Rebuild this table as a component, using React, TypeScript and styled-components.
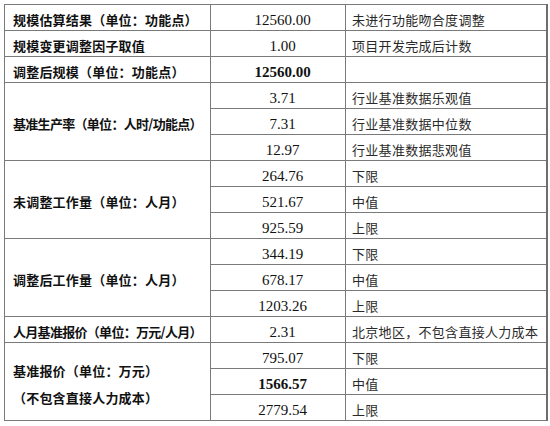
import React from "react";
import styled, { createGlobalStyle } from "styled-components";

const GlobalStyle = createGlobalStyle`
    body {
        margin: 0;
        background: #ffffff;
    }
    td {
        box-sizing: border-box;
    }
`;

const Page = styled.div`
    padding: 4px 0 0 4px;
`;

const Tabela = styled.table`
    border-collapse: collapse;
    table-layout: fixed;
    width: 542px;
    border: 1px solid #6e6e6e;
    border-right-width: 2px;
`;

const Linha = styled.tr`
    height: 26px;
`;

const Rotulo = styled.td<{ duplo?: boolean; apertado?: boolean }>`
    border: 1px solid #7a7a7a;
    padding: 5px 0 0 8px;
    font-family: "Noto Sans CJK SC", "Noto Sans", sans-serif;
    font-size: 13px;
    font-weight: bold;
    letter-spacing: ${props => (props.apertado ? "-0.7px" : "0.2px")};
    line-height: ${props => (props.duplo ? "27px" : "18px")};
    color: #111;
    white-space: nowrap;
    vertical-align: middle;
`;

const Valor = styled.td<{ forte?: boolean }>`
    height: 26px;
    border: 1px solid #7a7a7a;
    padding: 5px 0 0 9px;
    font-family: "Liberation Serif", "Times New Roman", serif;
    font-size: 15px;
    font-weight: ${props => (props.forte ? "bold" : "normal")};
    line-height: 18px;
    color: #111;
    text-align: center;
    vertical-align: middle;
`;

const Nota = styled.td`
    height: 26px;
    border: 1px solid #7a7a7a;
    padding: 5px 0 0 6px;
    font-family: "Noto Sans CJK SC", "Noto Sans", sans-serif;
    font-size: 13px;
    letter-spacing: 0.3px;
    line-height: 18px;
    color: #2a2a2a;
    white-space: nowrap;
    overflow: hidden;
    vertical-align: middle;
`;

type Faixa = { valor: string; nota: string; forte?: boolean };

const grupos: { rotulo: string[]; apertado?: boolean; faixas: Faixa[] }[] = [
    { rotulo: ["规模估算结果（单位：功能点）"], faixas: [{ valor: "12560.00", nota: "未进行功能吻合度调整" }] },
    { rotulo: ["规模变更调整因子取值"], faixas: [{ valor: "1.00", nota: "项目开发完成后计数" }] },
    { rotulo: ["调整后规模（单位：功能点）"], faixas: [{ valor: "12560.00", nota: "", forte: true }] },
    {
        rotulo: ["基准生产率（单位：人时/功能点）"],
        apertado: true,
        faixas: [
            { valor: "3.71", nota: "行业基准数据乐观值" },
            { valor: "7.31", nota: "行业基准数据中位数" },
            { valor: "12.97", nota: "行业基准数据悲观值" },
        ],
    },
    {
        rotulo: ["未调整工作量（单位：人月）"],
        faixas: [
            { valor: "264.76", nota: "下限" },
            { valor: "521.67", nota: "中值" },
            { valor: "925.59", nota: "上限" },
        ],
    },
    {
        rotulo: ["调整后工作量（单位：人月）"],
        faixas: [
            { valor: "344.19", nota: "下限" },
            { valor: "678.17", nota: "中值" },
            { valor: "1203.26", nota: "上限" },
        ],
    },
    {
        rotulo: ["人月基准报价（单位：万元/人月）"],
        apertado: true,
        faixas: [{ valor: "2.31", nota: "北京地区，不包含直接人力成本" }],
    },
    {
        rotulo: ["基准报价（单位：万元）", "（不包含直接人力成本）"],
        faixas: [
            { valor: "795.07", nota: "下限" },
            { valor: "1566.57", nota: "中值", forte: true },
            { valor: "2779.54", nota: "上限" },
        ],
    },
];

const App = () => {
    return (
        <Page>
            <GlobalStyle />
            <Tabela>
                <colgroup>
                    <col style={{ width: 206 }} />
                    <col style={{ width: 135 }} />
                    <col style={{ width: 201 }} />
                </colgroup>
                <tbody>
                    {grupos.map((g, gi) =>
                        g.faixas.map((f, fi) => (
                            <Linha key={`${gi}-${fi}`}>
                                {fi === 0 && (
                                    <Rotulo
                                        rowSpan={g.faixas.length}
                                        duplo={g.rotulo.length > 1}
                                        apertado={g.apertado}
                                    >
                                        {g.rotulo.map((r, ri) => (
                                            <div key={ri}>{r}</div>
                                        ))}
                                    </Rotulo>
                                )}
                                <Valor forte={f.forte}>{f.valor}</Valor>
                                <Nota>{f.nota}</Nota>
                            </Linha>
                        ))
                    )}
                </tbody>
            </Tabela>
        </Page>
    );
};

export default App;
